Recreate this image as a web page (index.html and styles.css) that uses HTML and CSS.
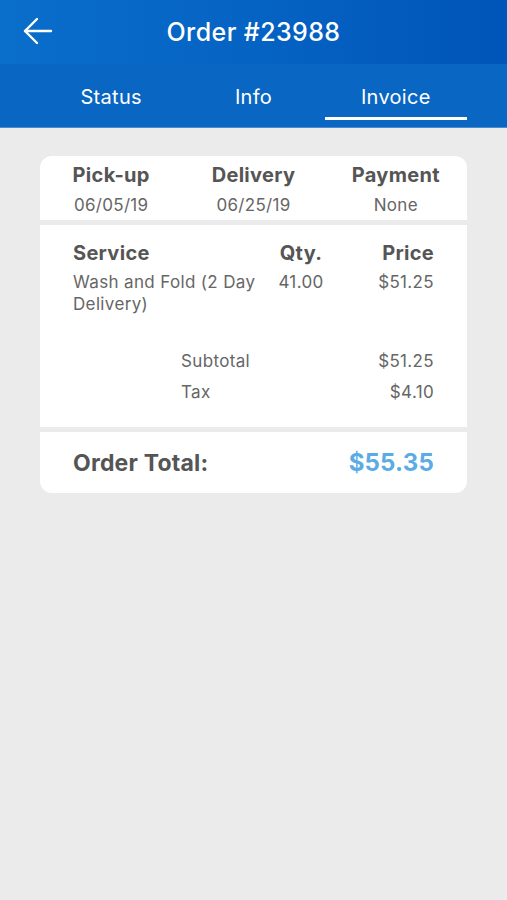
FILE: index.html
```html
<!DOCTYPE html>
<html lang="en">
<head>
<meta charset="utf-8">
<title>Order #23988</title>
<link rel="stylesheet" href="styles.css">
</head>
<body>
<header class="topbar">
  <button class="back" aria-label="Back">
    <svg width="30" height="28" viewBox="0 0 30 28" fill="none" stroke="#fff" stroke-width="2.4" stroke-linecap="round" stroke-linejoin="round">
      <path d="M2 14H28"/>
      <path d="M14 2L2 14L14 26"/>
    </svg>
  </button>
  <h1 class="title">Order #23988</h1>
</header>
<nav class="tabs">
  <div class="tab">Status</div>
  <div class="tab">Info</div>
  <div class="tab active">Invoice</div>
</nav>
<main class="content">
  <section class="card">
    <div class="sec sec-dates">
      <div class="col"><div class="h">Pick-up</div><div class="v">06/05/19</div></div>
      <div class="col"><div class="h">Delivery</div><div class="v">06/25/19</div></div>
      <div class="col"><div class="h">Payment</div><div class="v">None</div></div>
    </div>
    <div class="sec sec-items">
      <div class="grid">
        <div class="h">Service</div>
        <div class="h c">Qty.</div>
        <div class="h r">Price</div>
        <div class="t">Wash and Fold (2 Day Delivery)</div>
        <div class="t c">41.00</div>
        <div class="t r">$51.25</div>
      </div>
      <div class="sums">
        <div class="sum"><span>Subtotal</span><span>$51.25</span></div>
        <div class="sum"><span>Tax</span><span>$4.10</span></div>
      </div>
    </div>
    <div class="sec sec-total">
      <span class="tl">Order Total:</span>
      <span class="tv">$55.35</span>
    </div>
  </section>
</main>
</body>
</html>
```

FILE: styles.css
```css
* { box-sizing: border-box; }
html, body { margin: 0; padding: 0; }
body {
  background: #ebebeb;
  font-family: Inter, "Liberation Sans", sans-serif;
  color: #5a5a5a;
  min-height: 900px;
}
.topbar {
  height: 64px;
  background: linear-gradient(90deg, #0a6ecb 0%, #0563c3 50%, #0055b8 100%);
  display: flex;
  align-items: center;
  justify-content: center;
  position: relative;
}
.back {
  position: absolute;
  left: 23px;
  top: 17px;
  padding: 0;
  border: 0;
  background: none;
  display: block;
  line-height: 0;
}
.title {
  margin: 0;
  color: #fff;
  font-size: 25px;
  font-weight: 500;
  letter-spacing: 0.4px;
}
.tabs {
  height: 64px;
  background: #0966c2;
  border-bottom: 1px solid #4a8bd2;
  display: grid;
  grid-template-columns: repeat(3, 1fr);
  padding: 0 40px;
}
.tab {
  color: #fff;
  font-size: 20px;
  letter-spacing: 0.3px;
  text-align: center;
  padding-top: 21px;
  height: 56px;
}
.tab.active { border-bottom: 3px solid #fff; }
.content { padding: 28px 40px; }
.card {
  border-radius: 12px;
  overflow: hidden;
  display: flex;
  flex-direction: column;
  gap: 5px;
}
.sec { background: #fff; }
.sec-dates {
  display: grid;
  grid-template-columns: repeat(3, 1fr);
  padding: 7px 0 3px;
  text-align: center;
}
.h {
  font-size: 20px;
  font-weight: 700;
  line-height: 24px;
  letter-spacing: 0.3px;
  color: #555;
}
.v {
  font-size: 17px;
  line-height: 24px;
  margin-top: 6px;
  letter-spacing: 0.3px;
  color: #666;
}
.sec-items { padding: 16px 33px 19px; }
.grid {
  display: grid;
  grid-template-columns: 1fr 70px 98px;
  row-gap: 6px;
}
.t {
  font-size: 17px;
  line-height: 22px;
  letter-spacing: 0.35px;
  color: #666;
}
.c { text-align: center; }
.r { text-align: right; }
.sums { margin: 31px 0 0 108px; }
.sum {
  display: flex;
  justify-content: space-between;
  font-size: 17px;
  line-height: 31px;
  letter-spacing: 0.35px;
  color: #666;
}
.sec-total {
  display: flex;
  justify-content: space-between;
  align-items: baseline;
  padding: 0 33px;
  height: 61px;
  line-height: 61px;
}
.tl { font-size: 23px; font-weight: 700; color: #555; letter-spacing: 0.2px; }
.tv { font-size: 24px; font-weight: 700; color: #5aabe6; letter-spacing: 0.2px; }
```
